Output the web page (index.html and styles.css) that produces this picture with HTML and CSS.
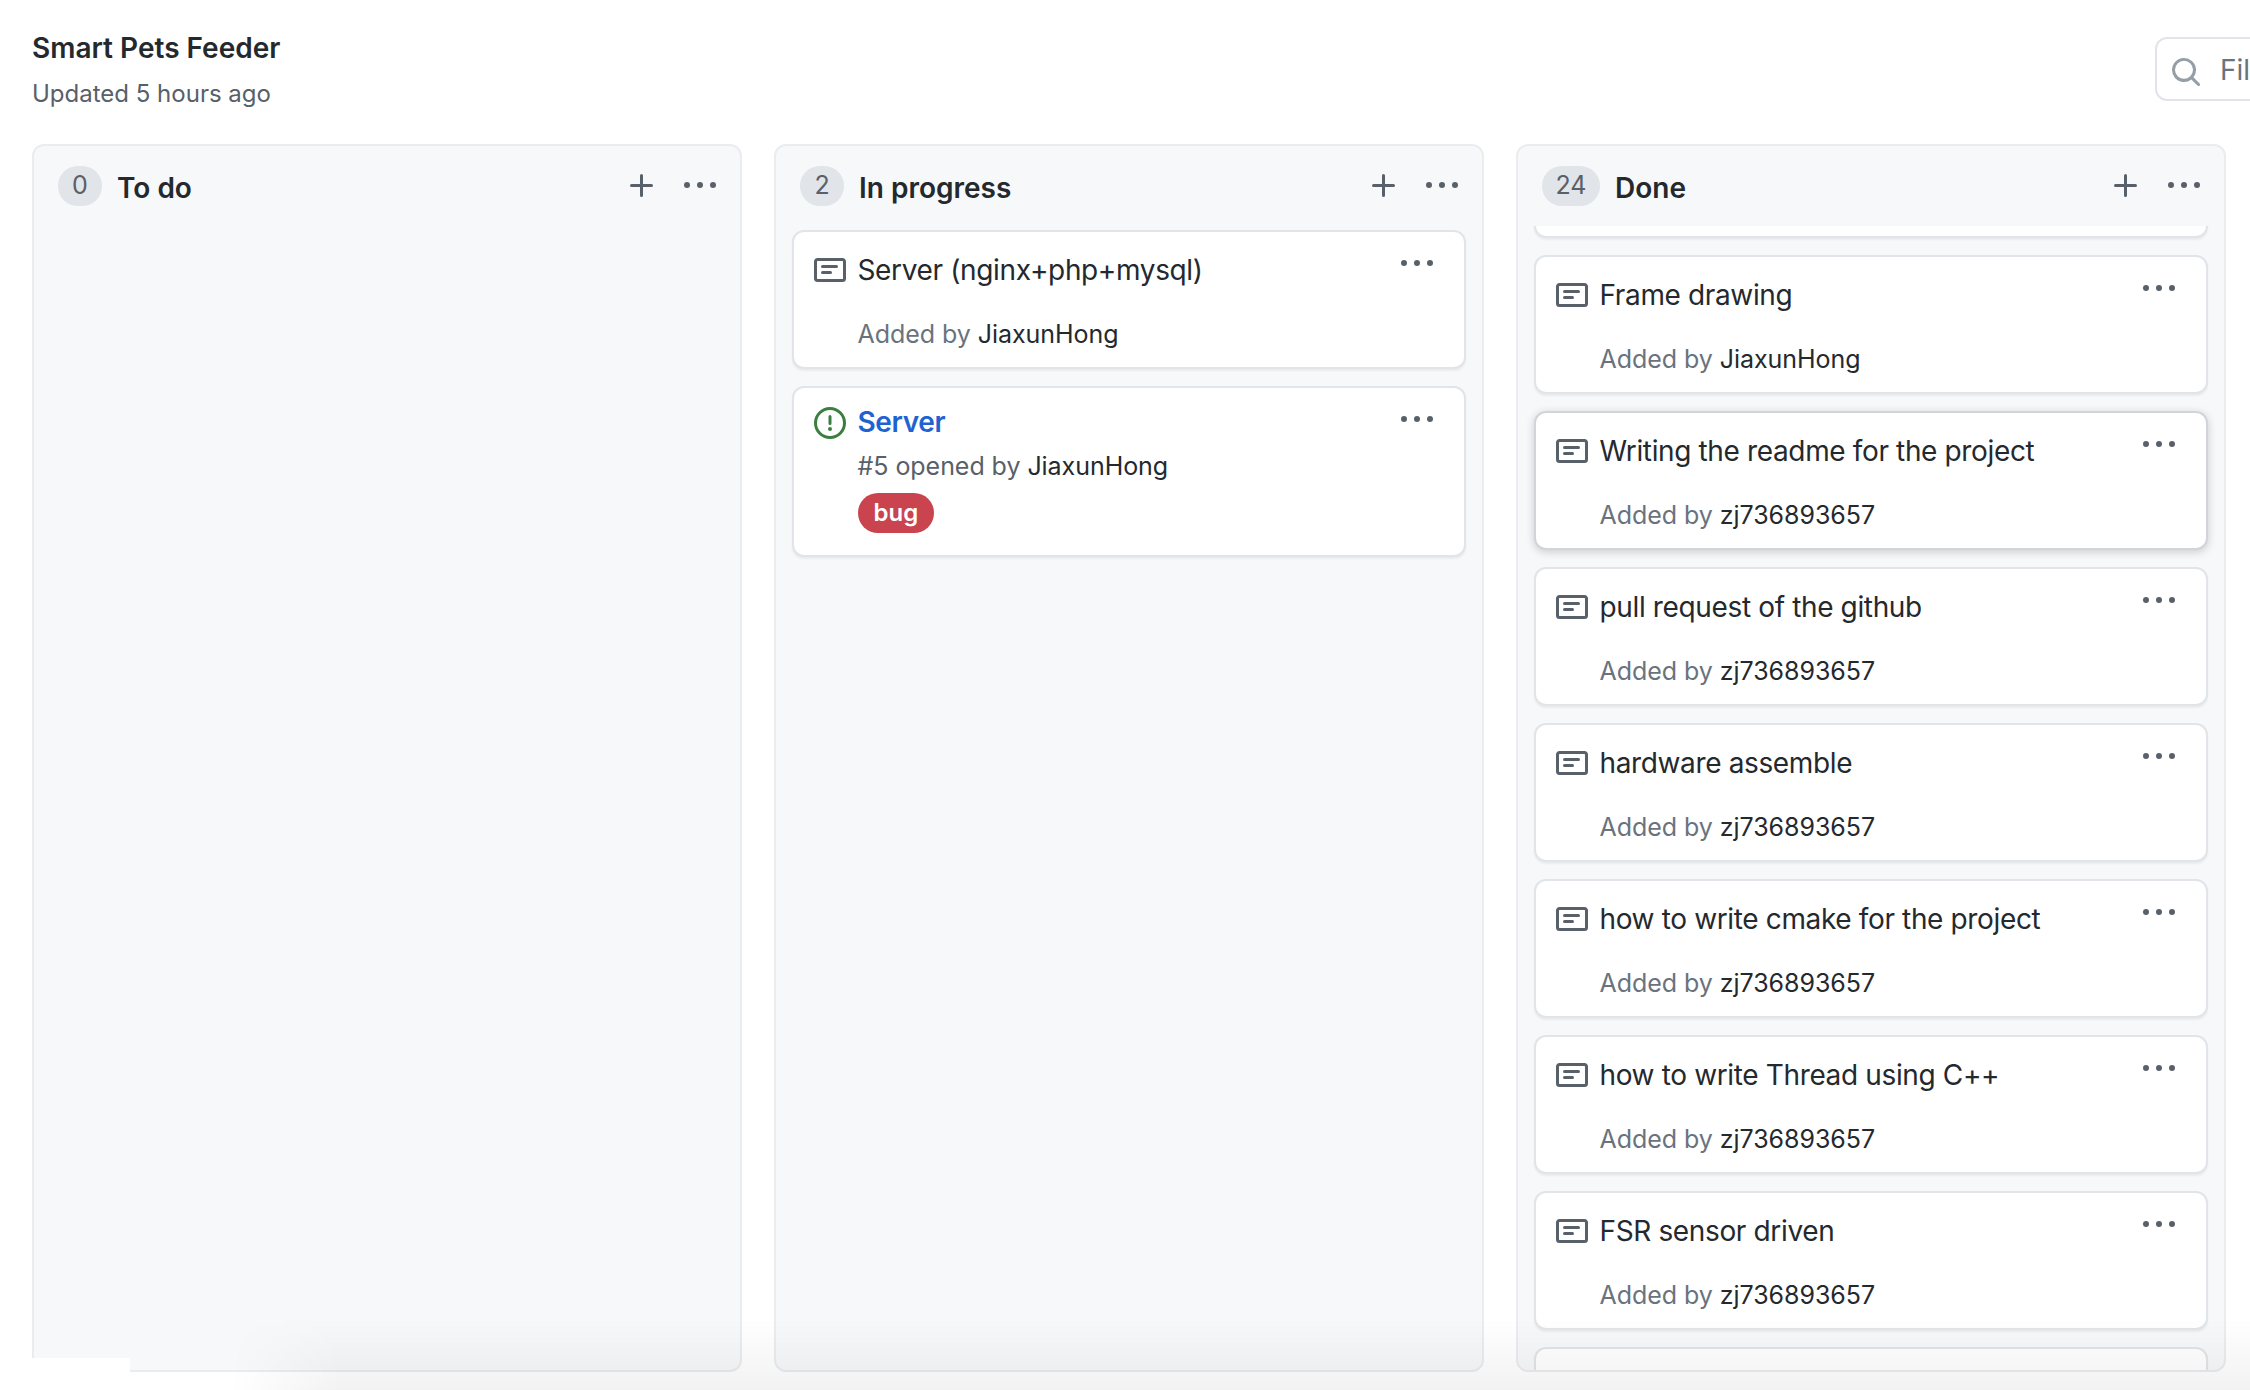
FILE: index.html
```html
<!DOCTYPE html>
<html lang="en">
  <head>
    <meta charset="UTF-8" />
    <title>Smart Pets Feeder</title>
    <link rel="stylesheet" href="styles.css">
  </head>
  <body>
    <svg class="defs" width="0" height="0">
      <symbol id="i-note" viewBox="0 0 16 16"><path d="M0 3.75C0 2.784.784 2 1.75 2h12.5c.966 0 1.75.784 1.75 1.75v8.5A1.75 1.75 0 0 1 14.25 14H1.75A1.75 1.75 0 0 1 0 12.25Zm1.75-.25a.25.25 0 0 0-.25.25v8.5c0 .138.112.25.25.25h12.5a.25.25 0 0 0 .25-.25v-8.5a.25.25 0 0 0-.25-.25ZM3.5 6.25a.75.75 0 0 1 .75-.75h7a.75.75 0 0 1 0 1.5h-7a.75.75 0 0 1-.75-.75Zm.75 2.25h4a.75.75 0 0 1 0 1.5h-4a.75.75 0 0 1 0-1.5Z"/></symbol>
      <symbol id="i-issue" viewBox="0 0 16 16"><path d="M8 1.5a6.5 6.5 0 100 13 6.5 6.5 0 000-13zM0 8a8 8 0 1116 0A8 8 0 010 8zm9 3a1 1 0 11-2 0 1 1 0 012 0zm-.25-6.25a.75.75 0 00-1.5 0v3.5a.75.75 0 001.5 0v-3.5z"/></symbol>
      <symbol id="i-plus" viewBox="0 0 16 16"><path d="M7.75 2a.75.75 0 0 1 .75.75V7h4.25a.75.75 0 0 1 0 1.5H8.5v4.25a.75.75 0 0 1-1.5 0V8.5H2.75a.75.75 0 0 1 0-1.5H7V2.75A.75.75 0 0 1 7.75 2Z"/></symbol>
      <symbol id="i-kebab" viewBox="0 0 16 16"><path d="M8 9a1.5 1.5 0 100-3 1.5 1.5 0 000 3zM1.5 9a1.5 1.5 0 100-3 1.5 1.5 0 000 3zm13 0a1.5 1.5 0 100-3 1.5 1.5 0 000 3z"/></symbol>
      <symbol id="i-search" viewBox="0 0 16 16"><path d="M10.68 11.74a6 6 0 0 1-7.922-8.982 6 6 0 0 1 8.982 7.922l3.04 3.04a.749.749 0 0 1-.326 1.275.749.749 0 0 1-.734-.215ZM11.5 7a4.499 4.499 0 1 0-8.997 0A4.499 4.499 0 0 0 11.5 7Z"/></symbol>
    </svg>

    <header class="top">
      <div class="top-text">
        <h1>Smart Pets Feeder</h1>
        <p>Updated 5 hours ago</p>
      </div>
      <div class="filter">
        <svg class="icon"><use href="#i-search"/></svg>
        <span>Filter cards</span>
      </div>
    </header>

    <main class="board">
      <section class="column">
        <div class="column-head">
          <span class="counter">0</span>
          <h2>To do</h2>
          <svg class="icon plus"><use href="#i-plus"/></svg>
          <svg class="icon"><use href="#i-kebab"/></svg>
        </div>
        <div class="cards"></div>
      </section>

      <section class="column">
        <div class="column-head">
          <span class="counter">2</span>
          <h2>In progress</h2>
          <svg class="icon plus"><use href="#i-plus"/></svg>
          <svg class="icon"><use href="#i-kebab"/></svg>
        </div>
        <div class="cards">
          <article class="card">
            <svg class="icon card-icon"><use href="#i-note"/></svg>
            <div class="card-body">
              <h3>Server (nginx+php+mysql)</h3>
              <p class="by">Added by <b>JiaxunHong</b></p>
            </div>
            <svg class="icon card-menu"><use href="#i-kebab"/></svg>
          </article>
          <article class="card issue">
            <svg class="icon card-icon"><use href="#i-issue"/></svg>
            <div class="card-body">
              <h3><a href="#">Server</a></h3>
              <p class="by">#5 opened by <b>JiaxunHong</b></p>
              <span class="label">bug</span>
            </div>
            <svg class="icon card-menu"><use href="#i-kebab"/></svg>
          </article>
        </div>
      </section>

      <section class="column">
        <div class="column-head">
          <span class="counter wide">24</span>
          <h2>Done</h2>
          <svg class="icon plus"><use href="#i-plus"/></svg>
          <svg class="icon"><use href="#i-kebab"/></svg>
        </div>
        <div class="cards scrolled">
          <article class="card"></article>
          <article class="card">
            <svg class="icon card-icon"><use href="#i-note"/></svg>
            <div class="card-body">
              <h3>Frame drawing</h3>
              <p class="by">Added by <b>JiaxunHong</b></p>
            </div>
            <svg class="icon card-menu"><use href="#i-kebab"/></svg>
          </article>
          <article class="card raised">
            <svg class="icon card-icon"><use href="#i-note"/></svg>
            <div class="card-body">
              <h3>Writing the readme for the project</h3>
              <p class="by">Added by <b>zj736893657</b></p>
            </div>
            <svg class="icon card-menu"><use href="#i-kebab"/></svg>
          </article>
          <article class="card">
            <svg class="icon card-icon"><use href="#i-note"/></svg>
            <div class="card-body">
              <h3>pull request of the github</h3>
              <p class="by">Added by <b>zj736893657</b></p>
            </div>
            <svg class="icon card-menu"><use href="#i-kebab"/></svg>
          </article>
          <article class="card">
            <svg class="icon card-icon"><use href="#i-note"/></svg>
            <div class="card-body">
              <h3>hardware assemble</h3>
              <p class="by">Added by <b>zj736893657</b></p>
            </div>
            <svg class="icon card-menu"><use href="#i-kebab"/></svg>
          </article>
          <article class="card">
            <svg class="icon card-icon"><use href="#i-note"/></svg>
            <div class="card-body">
              <h3>how to write cmake for the project</h3>
              <p class="by">Added by <b>zj736893657</b></p>
            </div>
            <svg class="icon card-menu"><use href="#i-kebab"/></svg>
          </article>
          <article class="card">
            <svg class="icon card-icon"><use href="#i-note"/></svg>
            <div class="card-body">
              <h3>how to write Thread using C++</h3>
              <p class="by">Added by <b>zj736893657</b></p>
            </div>
            <svg class="icon card-menu"><use href="#i-kebab"/></svg>
          </article>
          <article class="card">
            <svg class="icon card-icon"><use href="#i-note"/></svg>
            <div class="card-body">
              <h3>FSR sensor driven</h3>
              <p class="by">Added by <b>zj736893657</b></p>
            </div>
            <svg class="icon card-menu"><use href="#i-kebab"/></svg>
          </article>
          <article class="card"></article>
        </div>
      </section>
    </main>

    <div class="shade"></div>
    <div class="patch"></div>
  </body>
</html>
```

FILE: styles.css
```css
html,
body {
  height: 1390px;
  overflow: hidden;
}

body {
  margin: 0;
  background: #fff;
  color: #24292e;
  font-family: Inter, "Liberation Sans", sans-serif;
  position: relative;
}

.defs {
  position: absolute;
}

.icon {
  width: 32px;
  height: 32px;
  flex-shrink: 0;
  fill: #586069;
}

.top {
  display: flex;
  justify-content: space-between;
  height: 144px;
  padding-left: 32px;
  box-sizing: border-box;
}

.top-text {
  padding-top: 28px;
}

h1 {
  margin: 0;
  font-size: 28px;
  line-height: 40px;
  font-weight: 600;
}

.top-text p {
  margin: 6px 0 0;
  font-size: 24px;
  line-height: 40px;
  color: #586069;
}

.filter {
  display: flex;
  align-items: center;
  gap: 18px;
  flex-shrink: 0;
  width: 300px;
  height: 64px;
  margin-top: 37px;
  margin-right: -205px;
  padding-left: 13px;
  box-sizing: border-box;
  border: 2px solid #e1e4e8;
  border-radius: 12px;
  color: #6a737d;
  font-size: 28px;
}

.filter .icon {
  margin-top: 5px;
  fill: #959da5;
}

.filter span {
  margin-top: 2px;
}

.board {
  display: grid;
  grid-template-columns: repeat(3, 709.5px);
  column-gap: 32.5px;
  height: 1228px;
  padding-left: 32px;
}

.column {
  display: flex;
  flex-direction: column;
  min-height: 0;
  box-sizing: border-box;
  border: 2px solid #eaecef;
  border-radius: 12px;
  background: #f6f8fa;
}

.column-head {
  display: flex;
  align-items: center;
  height: 80px;
  padding: 0 24px;
  flex-shrink: 0;
  box-sizing: border-box;
}

.counter {
  min-width: 44px;
  height: 40px;
  box-sizing: border-box;
  border-radius: 20px;
  background: #e1e4e8;
  color: #586069;
  font-size: 25px;
  line-height: 38px;
  text-align: center;
}

.counter.wide {
  min-width: 58px;
}

h2 {
  flex: 1;
  margin: 4px 0 0 15px;
  font-size: 28px;
  line-height: 40px;
  font-weight: 600;
}

.plus {
  margin-right: 26px;
}

.cards {
  flex: 1;
  min-height: 0;
  overflow: hidden;
  display: flex;
  flex-direction: column;
  gap: 17px;
  padding: 4px 16px 0;
}

.card {
  display: flex;
  gap: 12px;
  flex-shrink: 0;
  height: 139px;
  box-sizing: border-box;
  padding: 18px 31px 0 19.5px;
  border: 2px solid #e1e4e8;
  border-radius: 12px;
  background: #fff;
  box-shadow: 0 2px 2px rgba(27, 31, 35, 0.06);
}

.scrolled .card:first-child {
  margin-top: -131px;
}

.raised {
  border-color: #d1d5da;
  box-shadow: 0 2px 8px rgba(27, 31, 35, 0.2);
}

.card-icon {
  margin-top: 4px;
}

.card-body {
  flex: 1;
  min-width: 0;
}

h3 {
  margin: 0;
  font-size: 28px;
  line-height: 40px;
  font-weight: 400;
  letter-spacing: -0.36px;
}

h3 a {
  color: #1f63d2;
  font-weight: 600;
  text-decoration: none;
}

.by {
  margin: 26px 0 0;
  font-size: 25px;
  line-height: 36px;
  letter-spacing: -0.05px;
  color: #6a737d;
}

.by b {
  font-weight: 400;
  color: #24292e;
}

.card-menu {
  margin-top: -2px;
}

.issue {
  height: 171px;
  padding-top: 14px;
}

.issue .card-icon {
  margin-top: 5px;
  fill: #3a7f3f;
}

.issue .card-menu {
  margin-top: 2px;
}

.issue .by {
  margin-top: 6px;
  color: #586069;
}

.label {
  display: inline-block;
  margin-top: 9px;
  padding: 0 16px;
  height: 40px;
  border-radius: 20px;
  background: #c9444f;
  color: #fff;
  font-size: 24px;
  line-height: 40px;
  font-weight: 600;
}

/* fade from the capture along the bottom edge */
.shade {
  position: absolute;
  left: 230px;
  right: 0;
  bottom: 0;
  height: 72px;
  background: linear-gradient(to bottom, rgba(0, 0, 0, 0), rgba(0, 0, 0, 0.05));
  -webkit-mask-image: linear-gradient(to right, transparent, #000 110px);
  mask-image: linear-gradient(to right, transparent, #000 110px);
}

.patch {
  position: absolute;
  left: 0;
  bottom: 0;
  width: 130px;
  height: 32px;
  background: #fff;
}
```
